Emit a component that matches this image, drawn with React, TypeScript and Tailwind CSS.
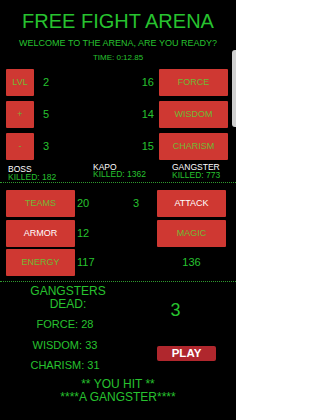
import React from "react";

const G = "text-[#27c22f]";

function RedBtn({ label, w, h, white, cls = "" }: { label: string; w: string; h: string; white?: boolean; cls?: string }) {
  return (
    <div
      className={`${w} ${h} bg-[#cf3832] rounded-[1px] flex items-center justify-center text-[9px] leading-none shadow-[0_1px_1px_rgba(0,0,0,0.5)] ${white ? "text-white" : "text-[#6fb834]"} ${cls}`}
    >
      {label}
    </div>
  );
}

function StatRow({ l, ln, rn, r }: { l: string; ln: string; rn: string; r: string }) {
  return (
    <div className="flex items-center h-[27px] pl-[6px] pr-[8px]">
      <RedBtn label={l} w="w-[28px]" h="h-[27px]" />
      <div className={`ml-[9px] text-[11px] leading-none ${G}`}>{ln}</div>
      <div className="flex-1" />
      <div className={`mr-[5px] text-[11px] leading-none ${G}`}>{rn}</div>
      <RedBtn label={r} w="w-[69px]" h="h-[27px]" />
    </div>
  );
}

export default function App() {
  return (
    <div className="relative w-[236px] h-[420px] bg-black overflow-hidden font-['Liberation_Sans',Arial,sans-serif] flex flex-col">
      <div className={`mt-[11px] h-[20px] leading-[20px] text-[20px] text-center ${G}`}>FREE FIGHT ARENA</div>
      <div className={`mt-[6px] h-[12px] leading-[12px] text-[9px] text-center ${G}`}>WELCOME TO THE ARENA, ARE YOU READY?</div>
      <div className={`mt-[3.5px] h-[10px] leading-[10px] text-[8px] text-center ${G}`}>TIME: 0:12.85</div>

      <div className="mt-[6.5px] flex flex-col gap-[5px]">
        <StatRow l="LVL" ln="2" rn="16" r="FORCE" />
        <StatRow l="+" ln="5" rn="14" r="WISDOM" />
        <StatRow l="-" ln="3" rn="15" r="CHARISM" />
      </div>

      <div className="h-[22px] grid grid-cols-[85px_79px_1fr] pl-[8px] items-start text-[8.5px]">
        <div className="mt-[6px] leading-[7.5px]">
          <div className="text-white">BOSS</div>
          <div className={G}>KILLED: 182</div>
        </div>
        <div className="mt-[3.5px] leading-[7.5px]">
          <div className="text-white">KAPO</div>
          <div className={G}>KILLED: 1362</div>
        </div>
        <div className="mt-[4px] leading-[7.5px]">
          <div className="text-white">GANGSTER</div>
          <div className={G}>KILLED: 773</div>
        </div>
      </div>

      <div className="border-t border-dotted border-[#2f9a2f]" />

      <div className="mt-[7px] grid grid-cols-[69px_40px_42px_69px] grid-rows-[27px_27px_27px] gap-y-[2.5px] pl-[6px] items-center">
        <RedBtn label="TEAMS" w="w-[69px]" h="h-[27px]" />
        <div className={`pl-[2px] text-[11px] leading-none ${G}`}>20</div>
        <div className={`text-center text-[11px] leading-none ${G}`}>3</div>
        <RedBtn label="ATTACK" w="w-[69px]" h="h-[27px]" white />

        <RedBtn label="ARMOR" w="w-[69px]" h="h-[27px]" white />
        <div className={`pl-[2px] text-[11px] leading-none ${G}`}>12</div>
        <div />
        <RedBtn label="MAGIC" w="w-[69px]" h="h-[27px]" />

        <RedBtn label="ENERGY" w="w-[69px]" h="h-[27px]" />
        <div className={`pl-[2px] text-[11px] leading-none ${G}`}>117</div>
        <div />
        <div className={`text-center text-[11px] leading-none ${G}`}>136</div>
      </div>

      <div className="mt-[5px] border-t border-dotted border-[#2f9a2f]" />

      <div className="flex">
        <div className={`w-[130px] flex flex-col items-center ${G}`}>
          <div className="mt-[3.3px] pl-[6px] text-[12px] leading-[13px] text-center">
            GANGSTERS
            <br />
            DEAD:
          </div>
          <div className="mt-[2.9px] text-[11px] leading-[20.5px] text-center">
            <div>FORCE: 28</div>
            <div>WISDOM: 33</div>
            <div>CHARISM: 31</div>
          </div>
        </div>
        <div className="flex-1 flex flex-col">
          <div className={`mt-[18.8px] ml-[40.5px] text-[18px] leading-[18px] ${G}`}>3</div>
          <div className="mt-[27.2px] ml-[27px] w-[59px] h-[15px] rounded-[2px] bg-[#b0272d] flex items-center justify-center text-white text-[11.5px] font-bold leading-none">
            PLAY
          </div>
        </div>
      </div>

      <div className={`mt-[2.6px] text-[12px] leading-[13px] text-center ${G}`}>
        ** YOU HIT **
        <br />
        ****A GANGSTER****
      </div>

      <div className="absolute right-0 top-[50px] w-[4px] h-[77px] rounded-l-[3px] bg-[#cfcfcf]" />
    </div>
  );
}
